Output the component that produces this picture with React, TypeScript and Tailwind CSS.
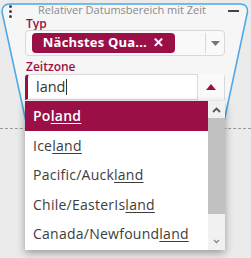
import React from 'react'

const CRIMSON = '#9a1046'

const options = [
  { pre: 'Po', hit: 'land' },
  { pre: 'Ice', hit: 'land' },
  { pre: 'Pacific/Auck', hit: 'land' },
  { pre: 'Chile/EasterIs', hit: 'land' },
  { pre: 'Canada/Newfound', hit: 'land' },
]

function NodeShape() {
  return (
    <svg className="absolute left-0 top-0" width="251" height="140" viewBox="0 0 251 140">
      <path
        d="M2 12 Q2 4 10 4 L240 4 Q248 4 247.5 12 L224 122 L26 122 Z"
        fill="#f6f6f6"
        stroke="#4fa8e8"
        strokeWidth="1.6"
      />
    </svg>
  )
}

export default function App() {
  return (
    <div
      className="relative w-[251px] h-[258px] overflow-hidden bg-[#ebebeb]"
      style={{ fontFamily: '"Open Sans", "Noto Sans", sans-serif' }}
    >
      {/* dashed connector */}
      <div className="absolute left-0 right-0 top-[128px] border-t border-dashed border-[#9a9a9a]" />

      <NodeShape />

      {/* header */}
      <div className="absolute left-0 top-0 w-[251px] h-[20px] flex items-center">
        <div className="ml-[9px] flex flex-col gap-[2px] mt-[2px]">
          <span className="w-[3px] h-[3px] rounded-full bg-[#444]" />
          <span className="w-[3px] h-[3px] rounded-full bg-[#444]" />
          <span className="w-[3px] h-[3px] rounded-full bg-[#444]" />
        </div>
        <div className="flex-1 text-center text-[11px] text-[#8a8a8a] mt-[1px] pl-[4px]">Relativer Datumsbereich mit Zeit</div>
        <div className="w-[11px] h-[2px] bg-[#444] mr-[12px] mt-[1px]" />
      </div>

      {/* fields */}
      <div className="absolute left-[25px] top-[17px] w-[200px] flex flex-col">
        <div className="text-[12px] font-semibold leading-[14px] h-[13px] pl-[1px]" style={{ color: CRIMSON }}>Typ</div>
        <div className="h-[26px] rounded-[4px] border border-[#d9d9d9] bg-[#f9f9f9] flex items-center">
          <div className="ml-[6px] h-[20px] w-[143px] rounded-[4px] flex items-center justify-center gap-[6px] text-white text-[13px] font-bold tracking-[0.2px]" style={{ background: CRIMSON }}>
            <span>Nächstes Qua...</span>
            <span className="text-[13px] font-bold">✕</span>
          </div>
          <div className="ml-auto h-[20px] border-l border-[#d9d9d9] w-[19px] flex items-center justify-center">
            <svg width="9" height="5" viewBox="0 0 9 5"><path d="M0 0 L9 0 L4.5 5 Z" fill="#777" /></svg>
          </div>
        </div>

        <div className="mt-[4px] text-[12px] font-semibold leading-[14px] h-[14px] pl-[1px]" style={{ color: CRIMSON }}>Zeitzone</div>
        <div className="h-[26px] rounded-t-[4px] border border-[#d9d9d9] border-l-[3px] bg-white flex items-center" style={{ borderLeftColor: CRIMSON }}>
          <span className="ml-[8px] text-[14.5px] text-[#333]">land</span>
          <span className="w-px h-[16px] bg-[#333] ml-[1px]" />
          <div className="ml-auto h-[26px] border-l border-[#d9d9d9] w-[27px] flex items-center justify-center bg-[#fafafa]">
            <svg width="10" height="6" viewBox="0 0 10 6"><path d="M0 6 L10 6 L5 0 Z" fill={CRIMSON} /></svg>
          </div>
        </div>
      </div>

      {/* dropdown */}
      <div className="absolute left-[25px] top-[101px] w-[200px] h-[149px] bg-white flex shadow-[0_3px_8px_rgba(0,0,0,0.35)]">
        <div className="flex-1 flex flex-col">
          {options.map((o, i) => (
            <div
              key={o.pre}
              className={`h-[29.5px] flex items-center pl-[8px] text-[14px] tracking-[0.25px] ${i === 0 ? 'text-white font-semibold' : 'text-[#3d3d3d]'}`}
              style={i === 0 ? { background: CRIMSON } : undefined}
            >
              <span>{o.pre}</span>
              <span className="underline underline-offset-2">{o.hit}</span>
            </div>
          ))}
        </div>
        <div className="w-[17px] flex flex-col bg-[#f1f1f1]">
          <div className="h-[17px] flex items-center justify-center">
            <svg width="9" height="6" viewBox="0 0 9 6"><path d="M1 5 L4.5 1.5 L8 5" fill="none" stroke="#555" strokeWidth="1.8" /></svg>
          </div>
          <div className="h-[96px] bg-[#c1c1c1]" />
          <div className="flex-1" />
          <div className="h-[17px] flex items-center justify-center">
            <svg width="7" height="5" viewBox="0 0 7 5"><path d="M1 1 L3.5 3.5 L6 1" fill="none" stroke="#888" strokeWidth="1.3" /></svg>
          </div>
        </div>
      </div>
    </div>
  )
}
